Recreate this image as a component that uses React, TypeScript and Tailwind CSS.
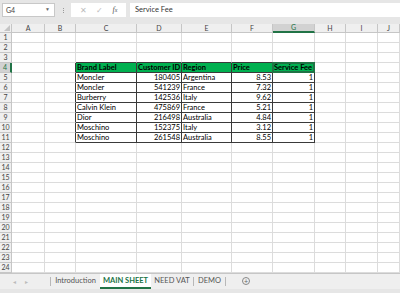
const cols = ["A", "B", "C", "D", "E", "F", "G", "H", "I", "J"];

const rows = [
  ["Moncler", "180405", "Argentina", "8.53", "1"],
  ["Moncler", "541239", "France", "7.32", "1"],
  ["Burberry", "142536", "Italy", "9.62", "1"],
  ["Calvin Klein", "475869", "France", "5.21", "1"],
  ["Dior", "216498", "Australia", "4.84", "1"],
  ["Moschino", "152375", "Italy", "3.12", "1"],
  ["Moschino", "261548", "Australia", "8.55", "1"],
];

const header = ["Brand Label", "Customer ID", "Region", "Price", "Service Fee"];
const rightAligned = [false, true, false, true, true];

function Cell({ r, c }: { r: number; c: number }) {
  // c: 0 = A ... 9 = J ; r: 1..24
  const inTable = r >= 4 && r <= 11 && c >= 2 && c <= 6;
  const darkRight = r >= 4 && r <= 11 && c >= 1 && c <= 6;
  const darkBottom = r >= 3 && r <= 11 && c >= 2 && c <= 6;
  const ti = c - 2;
  let text = "";
  let align = false;
  if (inTable) {
    text = r === 4 ? header[ti] : rows[r - 5][ti];
    align = r !== 4 && rightAligned[ti];
  }
  return (
    <div
      className={[
        "relative h-[10px] overflow-visible whitespace-nowrap px-[1px] text-[7.5px] leading-[9px] text-black",
        darkRight ? "border-r border-r-[#3a3a3a]" : "border-r border-r-[#dcdcdc]",
        darkBottom ? "border-b border-b-[#3a3a3a]" : "border-b border-b-[#dcdcdc]",
        r === 4 && inTable ? "bg-[#00b050] font-bold" : "bg-white",
        align ? "text-right" : "text-left",
      ].join(" ")}
    >
      {text}
      {r === 4 && c === 6 && (
        <div className="absolute -left-[1px] -top-[1px] h-[11px] w-[43px] border-2 border-[#217346]" />
      )}
    </div>
  );
}

export default function App() {
  return (
    <div className="h-[293px] w-[400px] overflow-hidden bg-[#e6e6e6] font-['Lato','Open_Sans',sans-serif]">
      {/* formula bar */}
      <div className="flex h-[18px] items-center gap-[4px] pl-[2px] pt-[2px]">
        <div className="flex h-[14px] w-[53px] items-center justify-between border border-[#c8c8c8] bg-white pl-[3px] pr-[4px] text-[7px] text-[#444]">
          <span>G4</span>
          <span className="text-[5px] text-[#666]">▼</span>
        </div>
        <div className="flex w-[8px] flex-col items-center gap-[1px]">
          <span className="h-[1px] w-[1px] bg-[#999]" />
          <span className="h-[1px] w-[1px] bg-[#999]" />
          <span className="h-[1px] w-[1px] bg-[#999]" />
        </div>
        <div className="flex h-[14px] w-[55px] items-center justify-around bg-white px-[4px] text-[8px] text-[#bbb]">
          <span>✕</span>
          <span>✓</span>
          <span className="font-['Liberation_Serif',serif] text-[8px] italic text-[#555]">
            f<span className="text-[6px]">x</span>
          </span>
        </div>
        <div className="flex h-[14px] flex-1 items-center bg-white pl-[5px] text-[7.5px] text-[#333]">
          Service Fee
        </div>
      </div>
      <div className="h-[6px]" />

      {/* sheet grid */}
      <div className="grid grid-cols-[12px_33px_31px_61px_45px_50px_41px_42px_31px_32px_22px] bg-white">
        <div className="relative h-[9px] border-b border-r border-[#c6c6c6] bg-[#efefef]">
          <div className="absolute bottom-[1px] right-[1px] h-0 w-0 border-b-[6px] border-l-[6px] border-b-[#c4c4c4] border-l-transparent" />
        </div>
        {cols.map((col) => (
          <div
            key={col}
            className={
              col === "G"
                ? "flex h-[9px] items-center justify-center border-b-2 border-r border-b-[#217346] border-r-[#c6c6c6] bg-[#d2d2d2] text-[7px] text-[#217346]"
                : "flex h-[9px] items-center justify-center border-b border-r border-[#c6c6c6] bg-[#efefef] text-[7px] text-[#444]"
            }
          >
            {col}
          </div>
        ))}
        {Array.from({ length: 24 }, (_, i) => i + 1).map((r) => (
          <Row key={r} r={r} />
        ))}
      </div>

      {/* sheet tabs */}
      <div className="flex h-[16px] items-start border-t border-[#c6c6c6] bg-[#efefef] text-[7.5px] text-[#555]">
        <div className="flex h-[14px] w-[50px] items-center gap-[9px] pl-[13px] text-[6px] text-[#bbb]">
          <span>◂</span>
          <span>▸</span>
        </div>
        <div className="mt-[3px] h-[9px] w-px bg-[#b8b8b8]" />
        <div className="flex h-[14px] w-[49px] items-center justify-center">Introduction</div>
        <div className="flex h-[15px] w-[51px] items-center justify-center border-b-2 border-[#217346] bg-white font-bold text-[#217346]">
          MAIN SHEET
        </div>
        <div className="flex h-[14px] w-[42px] items-center justify-center">NEED VAT</div>
        <div className="mt-[3px] h-[9px] w-px bg-[#b8b8b8]" />
        <div className="flex h-[14px] w-[31px] items-center justify-center">DEMO</div>
        <div className="mt-[3px] h-[9px] w-px bg-[#b8b8b8]" />
        <div className="flex h-[14px] w-[40px] items-center justify-center">
          <span className="flex h-[8px] w-[8px] items-center justify-center rounded-full border border-[#888] text-[7px] leading-none text-[#666]">
            +
          </span>
        </div>
      </div>
    </div>
  );
}

function Row({ r }: { r: number }) {
  return (
    <>
      <div
        className={
          r === 4
            ? "flex h-[10px] items-center justify-center border-b border-r-2 border-b-[#c6c6c6] border-r-[#217346] bg-[#d2d2d2] text-[7px] text-[#217346]"
            : "flex h-[10px] items-center justify-center border-b border-r border-[#c6c6c6] bg-[#efefef] text-[7px] text-[#444]"
        }
      >
        {r}
      </div>
      {cols.map((_, c) => (
        <Cell key={c} r={r} c={c} />
      ))}
    </>
  );
}
